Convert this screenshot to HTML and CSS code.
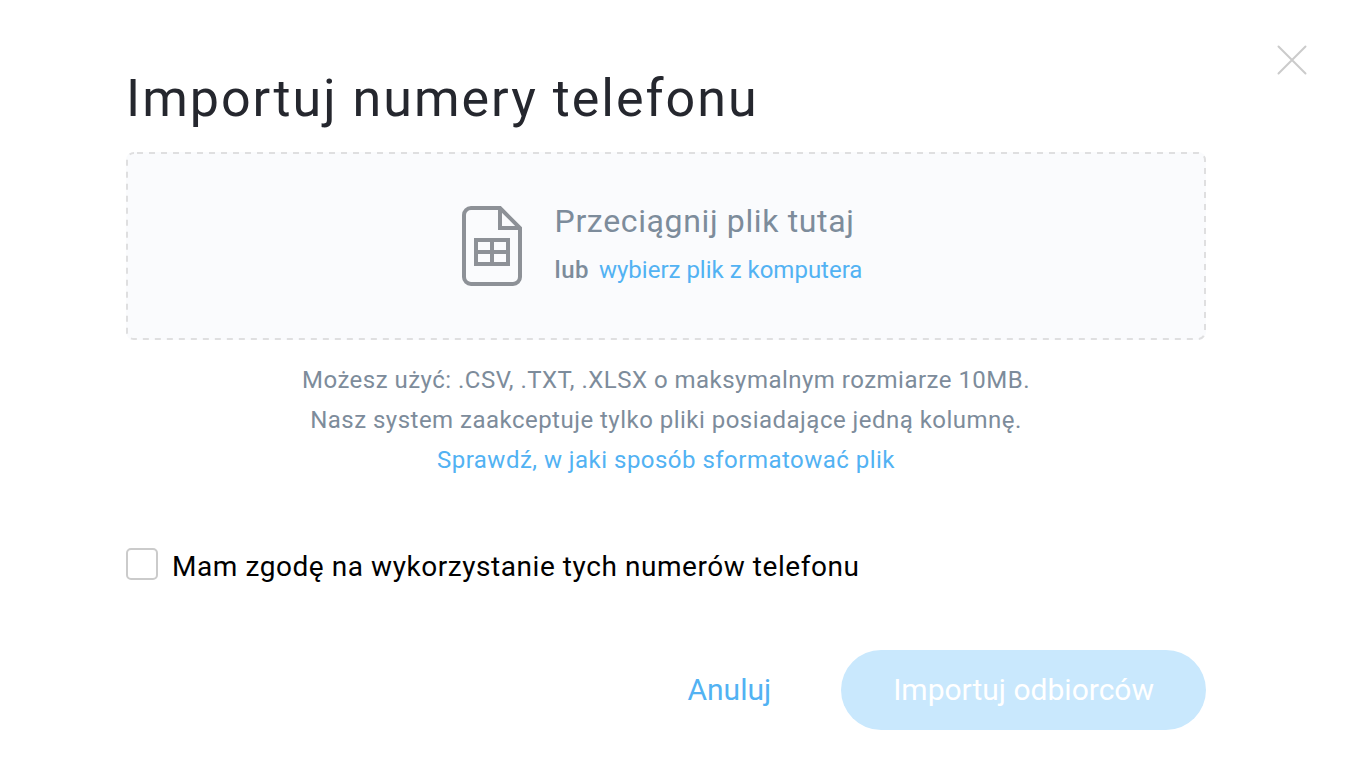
FILE: index.html
```html
<!DOCTYPE html>
<html lang="pl">
<head>
<meta charset="utf-8">
<meta name="viewport" content="width=device-width, initial-scale=1">
<title>Importuj numery telefonu</title>
<link rel="stylesheet" href="styles.css">
</head>
<body>
<main class="modal">
  <button class="close" type="button" aria-label="Zamknij">
    <svg width="30" height="30" viewBox="0 0 30 30" aria-hidden="true"><path d="M1.500 1.500L28.500 28.500M28.500 1.500L1.500 28.500"/></svg>
  </button>
  <form class="form">
    <h1 class="title">Importuj numery telefonu</h1>
    <section class="dropzone">
      <svg class="dropzone-border" aria-hidden="true"><rect class="dash" x="1" y="1" rx="7"/></svg>
      <svg class="file-icon" width="60" height="80" viewBox="0 0 60 80" aria-hidden="true">
        <path d="M38 2H9a7 7 0 0 0-7 7v62a7 7 0 0 0 7 7h42a7 7 0 0 0 7-7V22zM38 2v20h20M14 34h32v24H14zM14 46h32M30 34v24"/>
      </svg>
      <div class="drop-text">
        <p class="drop-title">Przeciągnij plik tutaj</p>
        <p class="drop-choice"><span class="or">lub</span><a class="link browse" href="#">wybierz plik z komputera</a></p>
      </div>
    </section>
    <div class="hints">
      <p>Możesz użyć: .CSV, .TXT, .XLSX o maksymalnym rozmiarze 10MB.</p>
      <p>Nasz system zaakceptuje tylko pliki posiadające jedną kolumnę.</p>
      <p><a class="link" href="#">Sprawdź, w jaki sposób sformatować plik</a></p>
    </div>
    <div class="consent">
      <input class="checkbox" type="checkbox" id="consent">
      <label for="consent">Mam zgodę na wykorzystanie tych numerów telefonu</label>
    </div>
    <div class="actions">
      <button class="cancel" type="button">Anuluj</button>
      <button class="submit" type="submit" disabled>Importuj odbiorców</button>
    </div>
  </form>
</main>
</body>
</html>
```
FILE: styles.css
```css
* { box-sizing: border-box; }
body { margin: 0; background: #fff; font-family: Roboto, sans-serif; }
h1, p { margin: 0; }
button { border: 0; padding: 0; background: none; font: inherit; }
.modal { position: relative; padding: 64px 150px 38px 126px; }
.close { position: absolute; top: 45px; right: 49px; width: 30px; height: 30px; }
.close svg { display: block; fill: none; stroke: #cbcbcb; stroke-width: 2; stroke-linecap: round; }
.title { font-size: 52px; line-height: 70px; font-weight: 400; letter-spacing: 2px; color: #25272e; }
.dropzone { position: relative; display: flex; justify-content: center; align-items: center; gap: 33px; min-height: 188px; margin-top: 18px; border-radius: 8px; background: #fafbfd; }
.dropzone-border { position: absolute; inset: 0; width: 100%; height: 100%; }
.dash { width: calc(100% - 2px); height: calc(100% - 2px); fill: none; stroke: #dfdfe0; stroke-width: 2; stroke-dasharray: 6 6; stroke-dashoffset: -3; }
.file-icon { fill: none; stroke: #8d9197; stroke-width: 4; }
.drop-text { padding-right: 8px; }
.drop-title { font-size: 32px; line-height: 48px; letter-spacing: 0.02em; color: #7d8c9b; }
.drop-choice { display: flex; gap: 10px; font-size: 24px; line-height: 50px; }
.or { font-weight: 500; letter-spacing: 0.02em; color: #7d8c9b; }
.link { color: #52b2f3; text-decoration: none; }
.hints { margin-top: 20px; text-align: center; font-size: 24px; line-height: 40px; letter-spacing: 0.02em; color: #7d8c9b; }
.consent { display: flex; align-items: flex-start; gap: 14px; margin-top: 68px; font-size: 28px; line-height: 38px; letter-spacing: 0.02em; color: #000; }
.checkbox { appearance: none; width: 32px; height: 32px; margin: 0; border: 2px solid #cbcbcb; border-radius: 5px; background: #fff; }
.actions { display: flex; justify-content: flex-end; align-items: center; gap: 70px; margin-top: 64px; font-size: 30px; }
.cancel, .submit { height: 80px; padding-bottom: 2px; }
.cancel { color: #52b2f3; }
.submit { padding-left: 52px; padding-right: 52px; border-radius: 40px; background: #c9e8fd; color: #fff; }
```
